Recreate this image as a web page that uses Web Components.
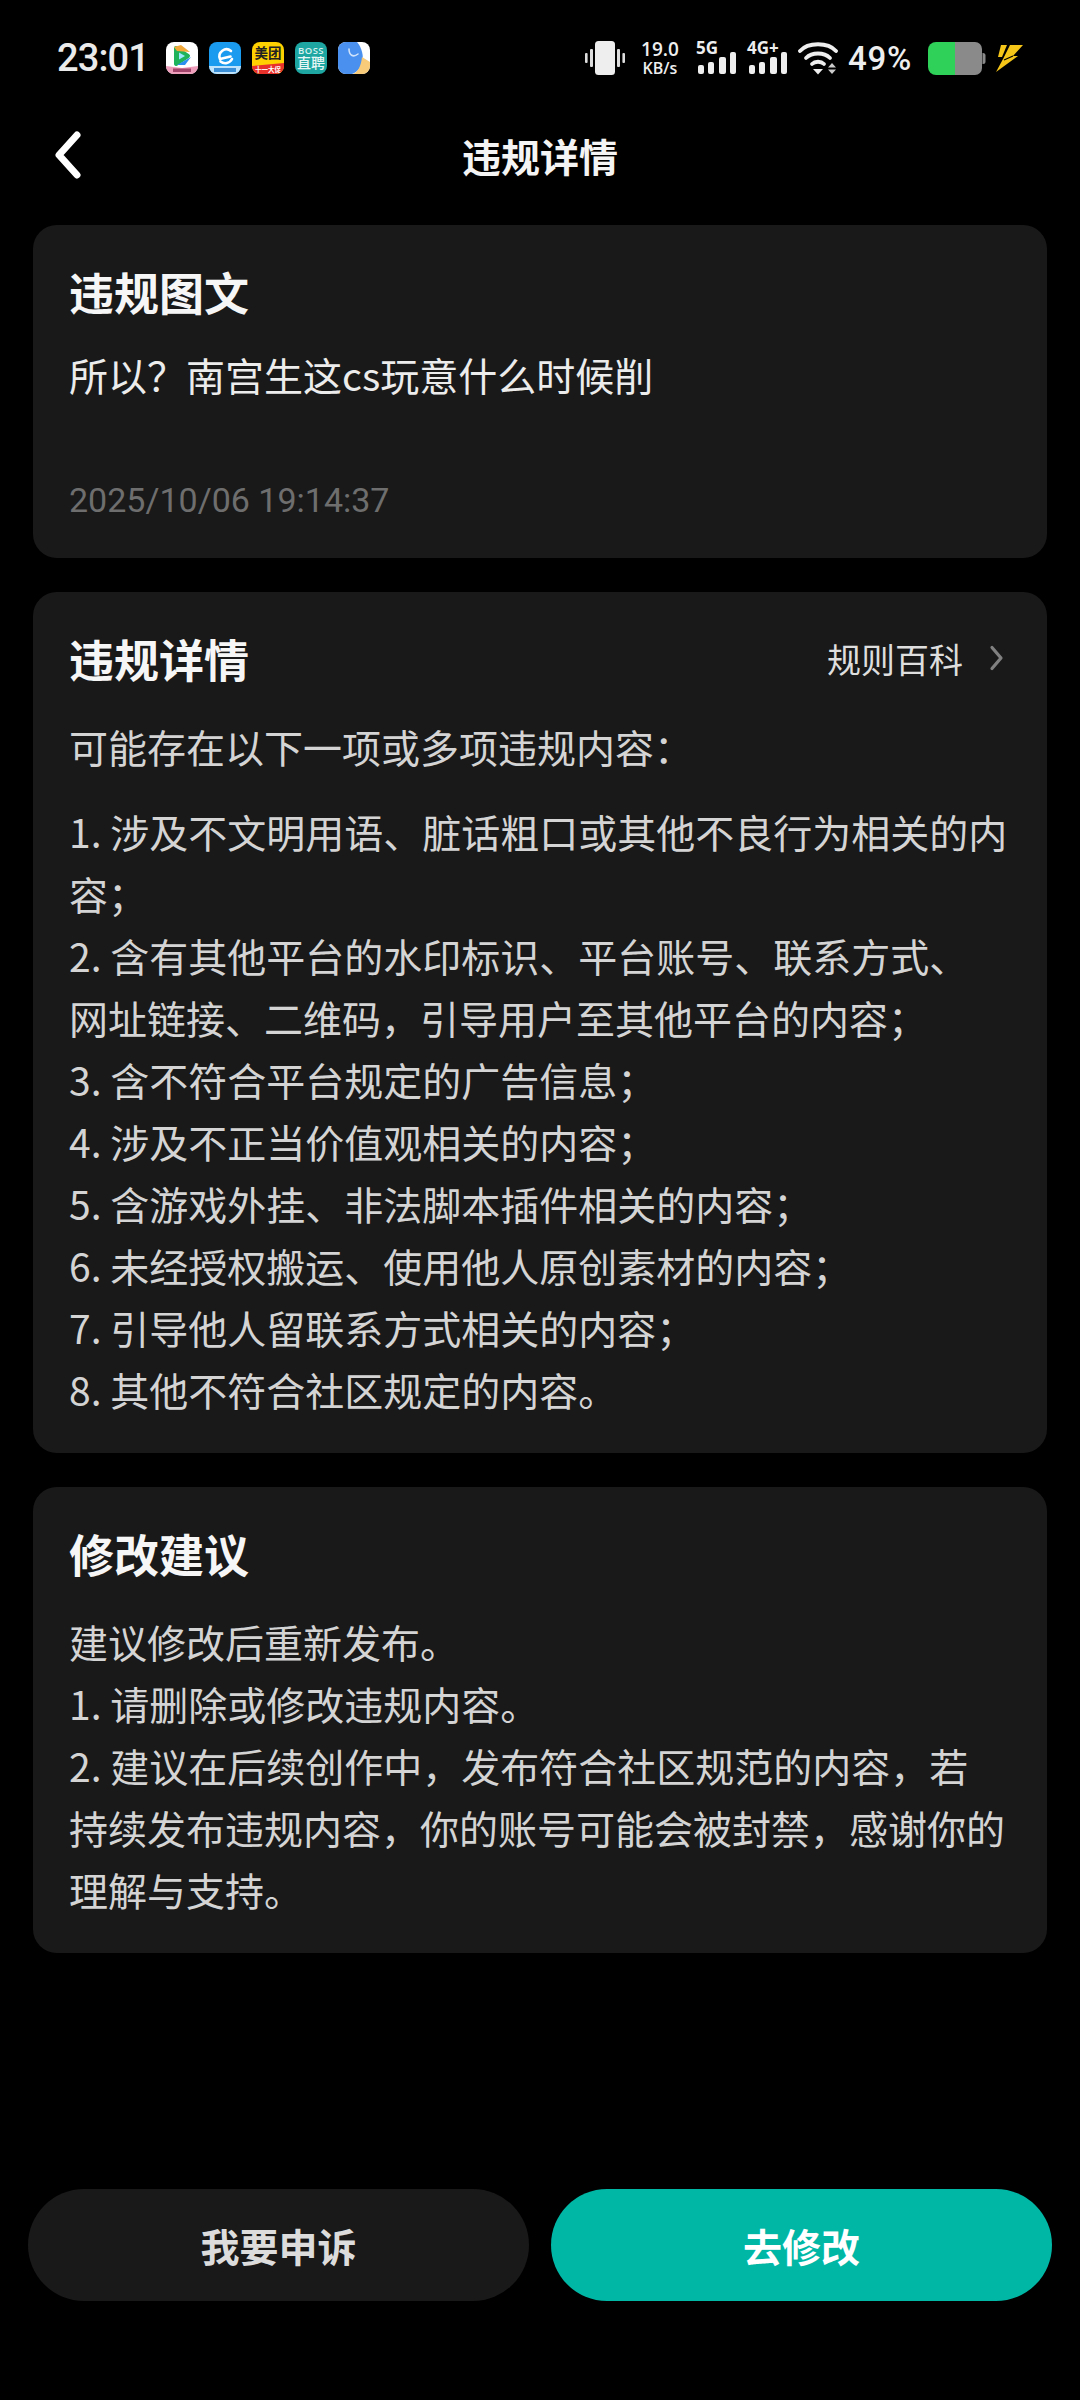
<!DOCTYPE html>
<html lang="zh-CN">
<head>
<meta charset="utf-8">
<title>违规详情</title>
<style>
  html, body { margin: 0; background: #000; }
  body { width: 1080px; height: 2400px; overflow: hidden; font-family: "Noto Sans CJK SC", "Noto Sans", sans-serif; }
  .quote { margin-top: -5px; }
</style>
</head>
<body>
<app-page>
  <status-bar slot="status"></status-bar>
  <nav-bar slot="nav">违规详情</nav-bar>

  <info-card>
    <span slot="title">违规图文</span>
    <div class="quote">
      <card-text>所以？南宫生这cs玩意什么时候削</card-text>
      <card-date>2025/10/06 19:14:37</card-date>
    </div>
  </info-card>

  <info-card>
    <span slot="title">违规详情</span>
    <rule-link slot="action">规则百科</rule-link>
    <card-text dim gap="23">可能存在以下一项或多项违规内容：</card-text>
    <card-text dim>1. 涉及不文明用语、脏话粗口或其他不良行为相关的内<br>容；<br>2. 含有其他平台的水印标识、平台账号、联系方式、<br>网址链接、二维码，引导用户至其他平台的内容；<br>3. 含不符合平台规定的广告信息；<br>4. 涉及不正当价值观相关的内容；<br>5. 含游戏外挂、非法脚本插件相关的内容；<br>6. 未经授权搬运、使用他人原创素材的内容；<br>7. 引导他人留联系方式相关的内容；<br>8. 其他不符合社区规定的内容。</card-text>
  </info-card>

  <info-card>
    <span slot="title">修改建议</span>
    <card-text dim>建议修改后重新发布。<br>1. 请删除或修改违规内容。<br>2. 建议在后续创作中，发布符合社区规范的内容，若<br>持续发布违规内容，你的账号可能会被封禁，感谢你的<br>理解与支持。</card-text>
  </info-card>

  <action-bar slot="actions">
    <pill-button>我要申诉</pill-button>
    <pill-button primary>去修改</pill-button>
  </action-bar>
</app-page>

<script>
// page shell
class AppPage extends HTMLElement {
  constructor() {
    super();
    this.attachShadow({ mode: 'open' });
    this.shadowRoot.innerHTML = `
      <style>
        :host { display: flex; flex-direction: column; height: 2400px; box-sizing: border-box; color: #fff; }
        main { display: flex; flex-direction: column; gap: 34px; padding: 0 33px; }
        footer { margin-top: auto; padding: 0 28px 99px 28px; }
      </style>
      <slot name="status"></slot>
      <slot name="nav"></slot>
      <main><slot></slot></main>
      <footer><slot name="actions"></slot></footer>
    `;
  }
}

class StatusBar extends HTMLElement {
  constructor() {
    super();
    this.attachShadow({ mode: 'open' });
    const bars = `
      <svg width="40" height="32" viewBox="0 0 40 32">
        <rect x="2" y="23" width="6" height="9" rx="2" fill="#eee"/>
        <rect x="12" y="20" width="6" height="12" rx="2" fill="#eee"/>
        <rect x="23" y="15" width="7" height="17" rx="2" fill="#eee"/>
        <rect x="34" y="10" width="6" height="22" rx="2" fill="#eee"/>
      </svg>`;
    this.shadowRoot.innerHTML = `
      <style>
        :host { display: flex; align-items: center; height: 116px; box-sizing: border-box; padding: 0 57px 0 57px; color: #eee; font-family: "Open Sans", sans-serif; }
        .time { font-size: 38px; font-weight: 500; width: 109px; letter-spacing: -0.9px; font-family: Roboto, sans-serif; color: #eaeaea; }
        .apps { display: flex; gap: 11px; }
        .right { margin-left: auto; display: flex; align-items: center; height: 34px; }
        .speed { width: 38px; margin: 0 17px 0 16px; display: flex; flex-direction: column; align-items: center; font-weight: 600; }
        .speed b { font-size: 19px; font-weight: 600; line-height: 21px; }
        .speed i { font-size: 16px; font-style: normal; white-space: nowrap; line-height: 17px; }
        .pct { font-size: 33px; font-weight: 500; width: 69px; margin: 0 10px; font-family: Roboto, sans-serif; letter-spacing: 0.8px; white-space: nowrap; }
        .sig { position: relative; width: 40px; height: 32px; margin-right: 11px; }
        .sig span { position: absolute; left: 0; top: -3px; font-size: 17px; font-weight: 700; line-height: 18px; white-space: nowrap; }
        svg { display: block; }
      </style>
      <span class="time">23:01</span>
      <div class="apps">
        <app-icon kind="video"></app-icon>
        <app-icon kind="ele"></app-icon>
        <app-icon kind="meituan"></app-icon>
        <app-icon kind="boss"></app-icon>
        <app-icon kind="blue"></app-icon>
      </div>
      <div class="right">
        <svg width="40" height="34" viewBox="0 0 40 34">
          <rect x="10" y="0" width="20" height="34" rx="3.5" fill="#eee"/>
          <rect x="0" y="12" width="2.6" height="10" rx="1" fill="#ddd"/>
          <rect x="5" y="8" width="3" height="18" rx="1" fill="#ddd"/>
          <rect x="32" y="8" width="3" height="18" rx="1" fill="#ddd"/>
          <rect x="37.4" y="12" width="2.6" height="10" rx="1" fill="#ddd"/>
        </svg>
        <div class="speed"><b>19.0</b><i>KB/s</i></div>
        <div class="sig"><span>5G</span>${bars}</div>
        <div class="sig"><span>4G+</span>${bars}</div>
        <svg width="40" height="34" viewBox="0 0 40 34">
          <g fill="none" stroke="#eee" stroke-width="3.8" stroke-linecap="round">
            <path d="M2 10 C10 1 30 1 38 10"/>
            <path d="M8 17 C14 11 26 11 32 17"/>
            <path d="M14 23 C17 20 23 20 26 23"/>
          </g>
          <path d="M15 28 H25 L20 33.5 Z" fill="#eee"/>
          <path d="M30 26.5 H38 L34 22 Z M30 28.5 H38 L34 33 Z" fill="#ccc"/>
        </svg>
        <span class="pct">49%</span>
        <svg width="59" height="33" viewBox="0 0 59 33">
          <path d="M9 0 H28 V33 H9 A8 8 0 0 1 1 25 V8 A8 8 0 0 1 9 0 Z" fill="#2fd158"/>
          <path d="M28 0 H48 A7 7 0 0 1 55 7 V26 A7 7 0 0 1 48 33 H28 Z" fill="#8a8a8a"/>
          <path d="M55.5 11 H56 A2.5 2.5 0 0 1 58.5 13.5 V19.5 A2.5 2.5 0 0 1 56 22 H55.5 Z" fill="#8a8a8a"/>
        </svg>
        <svg style="margin-left:10px" width="27" height="28" viewBox="0 0 27 28">
          <path d="M5 1 H11 L6 13 H2 Z" fill="#f5c518"/>
          <path d="M14 1 H27 L17 12 H22 L0 28 L7 15 H7 Z" fill="#f5c518"/>
          <path d="M8 16 L17 12" fill="none" stroke="#000" stroke-width="1.2"/>
        </svg>
      </div>
    `;
  }
}

// the little notification icons
class AppIcon extends HTMLElement {
  constructor() {
    super();
    this.attachShadow({ mode: 'open' });
    const kinds = {
      video: `<rect width="32" height="32" fill="#fff"/>
        <path d="M10 6 L22 14 L10 22 Z" fill="#1fb45c" stroke="#1fb45c" stroke-width="4" stroke-linejoin="round"/>
        <path d="M8 5 L15 3 L24 10 L11 9 Z" fill="#f2a93b"/>
        <path d="M11 23 L25 15 L19 23 Z" fill="#2b8ff0"/>
        <path d="M13 10.5 L19 14 L13 17.5 Z" fill="#9be8ff"/>
        <path d="M0 24 L16 26 L32 24 V32 H0 Z" fill="#ee9dbb"/>
        <rect x="7" y="26.5" width="18" height="3.5" fill="#a3446c"/>`,
      ele: `<rect width="32" height="32" fill="#1a9bf0"/>
        <path d="M21.5 14.5 L11 17 A7 7 0 0 1 22 9 M23 17 A7.5 7.5 0 0 1 11.5 19.5" fill="none" stroke="#fff" stroke-width="2.6" stroke-linecap="round"/>
        <rect y="24" width="32" height="8" fill="#bfe3fb"/>
        <rect x="5" y="26" width="22" height="4" fill="#3a8fd6"/>`,
      meituan: `<rect width="32" height="32" fill="#ffd100"/>
        <text x="16" y="16" text-anchor="middle" font-size="13.5" font-weight="700" fill="#222" font-family="Noto Sans CJK SC">美团</text>
        <path d="M0 24 L32 21 V32 H0 Z" fill="#e8312a"/>
        <text x="16" y="30" text-anchor="middle" font-size="6.5" font-weight="700" fill="#fff" font-family="Noto Sans CJK SC">十一大促</text>`,
      boss: `<rect width="32" height="32" fill="#1ea7a2"/>
        <text x="16" y="11.5" text-anchor="middle" font-size="9.5" font-weight="600" letter-spacing=".4" fill="#d8f1f0" font-family="Open Sans">BOSS</text>
        <text x="16" y="26" text-anchor="middle" font-size="14" font-weight="500" fill="#e8f7f6" font-family="Noto Sans CJK SC">直聘</text>`,
      blue: `<rect width="32" height="32" fill="#fff"/>
        <path d="M0 0 H19 C24 6 26 14 24 21 C22 27 19 30 14 32 H0 Z" fill="#4a90ee"/>
        <path d="M24 15 L32 20 V32 H15 C20 30 23 24 24 15 Z" fill="#f7cb7a"/>
        <path d="M11 7 C11 13 15 16 20 12" fill="none" stroke="#cfe2fb" stroke-width="1.6" stroke-linecap="round"/>`
    };
    this.shadowRoot.innerHTML = `
      <style>
        :host { display: block; width: 32px; height: 32px; border-radius: 8px; overflow: hidden; }
        svg { display: block; }
      </style>
      <svg width="32" height="32" viewBox="0 0 32 32">${kinds[this.getAttribute('kind')] || ''}</svg>
    `;
  }
}

class NavBar extends HTMLElement {
  constructor() {
    super();
    this.attachShadow({ mode: 'open' });
    this.shadowRoot.innerHTML = `
      <style>
        :host { display: flex; align-items: center; justify-content: center; position: relative; height: 78px; margin-bottom: 31px; font-size: 39px; font-weight: 700; color: #f4f4f4; }
        svg { position: absolute; left: 54px; top: 15px; }
      </style>
      <svg width="28" height="48" viewBox="0 0 28 48">
        <path d="M23 4 L5 24 L23 44" fill="none" stroke="#fff" stroke-width="7" stroke-linecap="round" stroke-linejoin="round"/>
      </svg>
      <slot></slot>
    `;
  }
}

class InfoCard extends HTMLElement {
  constructor() {
    super();
    this.attachShadow({ mode: 'open' });
    this.shadowRoot.innerHTML = `
      <style>
        :host { display: block; background: #191919; border-radius: 24px; padding: 31px 36px 33px 36px; }
        header { display: flex; align-items: center; justify-content: space-between; height: 70px; margin-bottom: 22px; }
        .title { font-size: 45px; font-weight: 700; color: #f6f6f6; }
      </style>
      <header>
        <div class="title"><slot name="title"></slot></div>
        <slot name="action"></slot>
      </header>
      <slot></slot>
    `;
  }
}

class CardText extends HTMLElement {
  constructor() {
    super();
    this.attachShadow({ mode: 'open' });
    const color = this.hasAttribute('dim') ? '#d4d4d4' : '#ececec';
    const gap = this.getAttribute('gap') || 0;
    this.shadowRoot.innerHTML = `
      <style>
        :host { display: block; font-size: 39px; line-height: 62px; color: ${color}; margin-bottom: ${gap}px; white-space: nowrap; }
      </style>
      <slot></slot>
    `;
  }
}

class CardDate extends HTMLElement {
  constructor() {
    super();
    this.attachShadow({ mode: 'open' });
    this.shadowRoot.innerHTML = `
      <style>
        :host { display: block; margin-top: 75px; margin-bottom: 5px; font-family: Roboto, "Noto Sans", sans-serif; font-size: 34px; line-height: 40px; color: #6e6e6e; }
      </style>
      <slot></slot>
    `;
  }
}

class RuleLink extends HTMLElement {
  constructor() {
    super();
    this.attachShadow({ mode: 'open' });
    this.shadowRoot.innerHTML = `
      <style>
        :host { display: flex; align-items: center; gap: 26px; font-size: 34px; color: #dedede; padding-right: 7px; }
      </style>
      <slot></slot>
      <svg width="15" height="26" viewBox="0 0 15 26">
        <path d="M3 2.5 L12 13 L3 23.5" fill="none" stroke="#808080" stroke-width="3.2" stroke-linecap="round" stroke-linejoin="round"/>
      </svg>
    `;
  }
}

class ActionBar extends HTMLElement {
  constructor() {
    super();
    this.attachShadow({ mode: 'open' });
    this.shadowRoot.innerHTML = `
      <style>
        :host { display: grid; grid-template-columns: 1fr 1fr; gap: 22px; }
      </style>
      <slot></slot>
    `;
  }
}

class PillButton extends HTMLElement {
  constructor() {
    super();
    this.attachShadow({ mode: 'open' });
    const primary = this.hasAttribute('primary');
    this.shadowRoot.innerHTML = `
      <style>
        :host { display: flex; align-items: center; justify-content: center; height: 112px; border-radius: 56px; font-size: 39px; font-weight: 700;
          background: ${primary ? '#00b7a6' : '#191919'}; color: ${primary ? '#fff' : '#dcdcdc'}; }
      </style>
      <slot></slot>
    `;
  }
}

customElements.define('app-page', AppPage);
customElements.define('status-bar', StatusBar);
customElements.define('app-icon', AppIcon);
customElements.define('nav-bar', NavBar);
customElements.define('info-card', InfoCard);
customElements.define('card-text', CardText);
customElements.define('card-date', CardDate);
customElements.define('rule-link', RuleLink);
customElements.define('action-bar', ActionBar);
customElements.define('pill-button', PillButton);
</script>
</body>
</html>
